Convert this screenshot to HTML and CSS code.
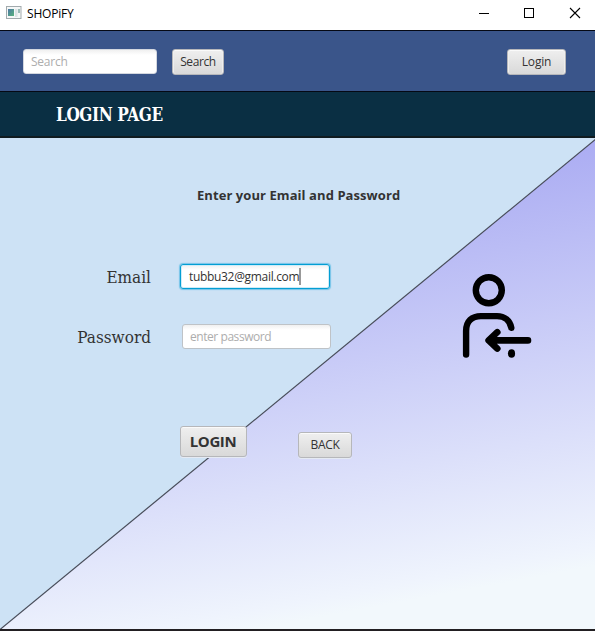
FILE: index.html
```html
<!DOCTYPE html>
<html lang="en">
<head>
<meta charset="utf-8">
<title>SHOPiFY</title>
<link rel="stylesheet" href="styles.css">
</head>
<body>
<header class="titlebar">
  <svg class="app-icon" width="16" height="14" viewBox="0 0 16 14">
    <defs><linearGradient id="app" x1="0" y1="0" x2="1" y2="1"><stop offset="0" stop-color="#4c77a5"/><stop offset="1" stop-color="#57b37c"/></linearGradient></defs>
    <rect x=".5" y=".5" width="14.5" height="12" fill="#f5f7f7" stroke="#a2aaad"/>
    <rect x="2" y="3" width="6" height="7" fill="url(#app)"/>
    <rect x="9" y="3" width="2.5" height="8" fill="#dce3e5"/>
    <rect x="12" y="3" width="2" height="4" fill="#9bbcb8"/>
  </svg>
  <span class="app-name">SHOPiFY</span>
  <svg class="controls" width="104" height="12" viewBox="0 0 104 12" fill="none" stroke="#000">
    <path d="M0 6.5H10M45.5 1.5h9v9h-9z" shape-rendering="crispEdges"/>
    <path d="M91 1l10 10M101 1L91 11" stroke-width="1.1"/>
  </svg>
</header>
<nav class="nav">
  <div class="field search"><span class="hint">Search</span></div>
  <div class="button nav-search"><span>Search</span></div>
  <div class="button nav-login"><span>Login</span></div>
</nav>
<div class="heading"><h1>LOGIN PAGE</h1></div>
<main class="content">
  <svg class="backdrop" width="595" height="491" viewBox="0 138 595 491">
    <defs><linearGradient id="fade" gradientUnits="userSpaceOnUse" x1="510" y1="129" x2="591" y2="567"><stop offset="0" stop-color="#a7a8f2"/><stop offset=".96" stop-color="#eff4fd"/><stop offset="1" stop-color="#f2f8fc"/></linearGradient></defs>
    <path d="M0 629.5L596 139V640H0z" fill="url(#fade)"/>
    <path d="M0 629.5L596 139" stroke="#474c59" stroke-width="1.2"/>
  </svg>
  <p class="prompt"><span>Enter your Email and Password</span></p>
  <div class="body">
    <form class="form">
      <label class="label"><span>Email</span></label>
      <div class="field focused"><span class="value">tubbu32@gmail.com</span><i class="caret"></i></div>
      <label class="label"><span>Password</span></label>
      <div class="field password"><span class="hint">enter password</span></div>
    </form>
    <svg class="user-icon" width="72" height="88" viewBox="461 272 72 88" fill="none" stroke="#000" stroke-width="6.4" stroke-linecap="round" stroke-linejoin="round">
      <circle cx="488.8" cy="290.2" r="13"/>
      <path d="M466.1 354.6V331C466.1 321 472 316.1 481 316.1H497C504.5 316.1 510 320.5 511.3 327.8"/>
      <path d="M528 340.4H490M497.3 332.2L488.6 340.4L497.3 348.6" stroke-width="6.6"/>
      <ellipse cx="511.5" cy="353.5" rx="3.6" ry="4.3" fill="#000" stroke="none"/>
    </svg>
  </div>
  <div class="actions">
    <div class="button submit"><span>LOGIN</span></div>
    <div class="button back"><span>BACK</span></div>
  </div>
</main>
</body>
</html>
```
FILE: styles.css
```css
* { box-sizing: border-box; }
body {
  margin: 0;
  width: 595px;
  height: 631px;
  overflow: hidden;
  background: #fff;
  color: #333;
  font: 12px/16px "Open Sans", "Noto Sans", sans-serif;
}
span { white-space: nowrap; }
.titlebar { display: flex; align-items: flex-start; height: 30px; padding: 6px 12px 0 6px; }
.app-name { margin: 0 0 0 5px; color: #000; letter-spacing: -.2px; }
.controls { margin: 1px 0 0 auto; }
.nav {
  display: flex;
  align-items: flex-start;
  height: 62px;
  padding: 18px 29px 0 23px;
  border-top: 1px solid #050914;
  border-bottom: 1px solid #050914;
  background: #3a558a;
}
.field {
  display: flex;
  align-items: center;
  height: 25px;
  padding-left: 8px;
  border: 1px solid #bfc3c7;
  border-radius: 3px;
  background: linear-gradient(#f0f0f0, #fff 5px);
}
.hint { color: #adadad; }
.search { width: 134px; padding-left: 7px; border-color: #d3d7df; }
.search .hint { letter-spacing: -.25px; }
.button {
  display: flex;
  align-items: center;
  justify-content: center;
  height: 26px;
  border: 1px solid #b6b7ba;
  border-radius: 3px;
  background: linear-gradient(#efefef, #d9d9d9);
  box-shadow: inset 0 1px #fafafa, inset 1px 0 #eee, inset -1px 0 #eee;
}
.nav-search { width: 52px; margin-left: 15px; letter-spacing: -.4px; }
.nav-login { width: 59px; margin-left: auto; letter-spacing: -.2px; }
.heading {
  height: 46px;
  padding: 12px 0 0 56px;
  border-bottom: 2px solid #101b20;
  background: #0a2f43;
}
h1 { margin: 0; color: #fff; font: bold 18px/22px "DejaVu Serif Condensed", "DejaVu Serif", serif; letter-spacing: -.4px; transform: scaleX(.945); transform-origin: left; }
.content {
  position: relative;
  height: 493px;
  border-bottom: 2px solid #221f22;
  background: #cde2f5;
}
.backdrop { position: absolute; top: 0; left: 0; }
.prompt, .body, .actions { position: relative; }
.prompt { margin: 0; padding: 48px 0 0 197px; font-size: 13px; line-height: 18px; font-weight: bold; letter-spacing: .07px; }
.body { display: flex; align-items: flex-start; height: 222px; padding-top: 60px; }
.form { display: grid; grid-template-columns: 151px 150px; grid-template-rows: 26px 26px; gap: 34px 29px; align-items: start; }
.label { display: flex; align-items: center; justify-content: flex-end; height: 26px; font: 17px/24px "DejaVu Serif Condensed", "DejaVu Serif", serif; }
.focused { border: 1px solid #039ed3; box-shadow: 0 0 1px 1px #75c4e8, inset 0 0 0 1px #cfecf8; }
.value { letter-spacing: -.32px; }
.caret { width: 2px; height: 17px; background: #999; }
.password { width: 149px; margin-left: 2px; padding-left: 7px; }
.password .hint { letter-spacing: -.44px; }
.user-icon { margin: 8px 0 0 131px; }
.actions { display: flex; align-items: flex-start; padding-left: 180px; }
.submit { width: 67px; height: 31px; padding: 0 1px 2px 0; font-size: 15px; font-weight: bold; letter-spacing: -.4px; }
.back { width: 54px; margin: 6px 0 0 51px; letter-spacing: -.3px; }
.actions .button { box-shadow: inset 0 1px #fafafa, 0 1px #e5eaf3; }
```
